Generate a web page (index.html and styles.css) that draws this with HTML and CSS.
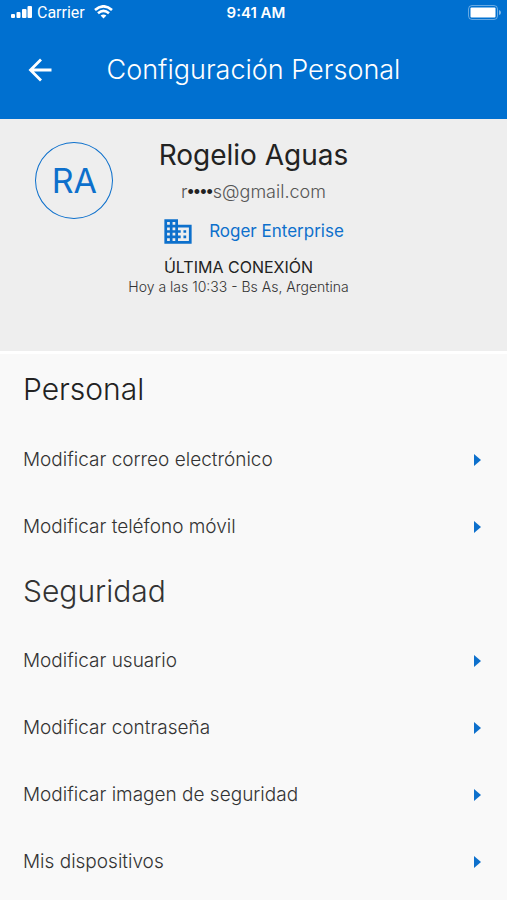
FILE: index.html
```html
<!DOCTYPE html>
<html lang="es">
<head>
  <meta charset="UTF-8" />
  <meta name="viewport" content="width=device-width, initial-scale=1.0"/>
  <title>Configuración Personal</title>
  <link rel="stylesheet" href="styles.css">
</head>
<body>
  <header class="header">
    <div class="status-bar">
      <div class="status-left">
        <svg width="21" height="12" viewBox="0 0 21 12" fill="#fff">
          <rect x="0" y="8" width="4" height="4" rx="1"/>
          <rect x="5.500" y="6" width="4" height="6" rx="1"/>
          <rect x="11" y="3" width="4.500" height="9" rx="1"/>
          <rect x="16.500" y="0" width="4.500" height="12" rx="1"/>
        </svg>
        <span class="carrier">Carrier</span>
        <svg class="wifi" width="19" height="14" viewBox="0 0 19 14" fill="none" stroke="#fff" stroke-width="2.6">
          <path d="M1 5Q9.500-2.400 18 5"/>
          <path d="M4 8.300Q9.500 3.400 15 8.300"/>
          <path d="M6.600 10.600Q9.500 8.200 12.400 10.600L9.500 13.500Z" fill="#fff" stroke="none"/>
        </svg>
      </div>
      <span class="time">9:41 AM</span>
      <svg class="battery" width="33" height="15" viewBox="0 0 33 15">
        <rect x="0.500" y="0.500" width="29" height="14" rx="3.500" fill="none" stroke="#fff" stroke-opacity="0.400"/>
        <rect x="2.500" y="2.500" width="25" height="10" rx="1" fill="#fff"/>
        <path d="M31 5Q33 5.500 33 7.500T31 10Z" fill="#fff" fill-opacity="0.500"/>
      </svg>
    </div>
    <div class="nav-bar">
      <button class="back" type="button" aria-label="Volver">
        <svg width="24" height="24" viewBox="0 0 24 24" fill="none" stroke="#fff" stroke-width="2.800">
          <path d="M23.500 12H3M13 1.500L2.500 12L13 22.500"/>
        </svg>
      </button>
      <h1>Configuración Personal</h1>
    </div>
  </header>

  <section class="profile">
    <div class="avatar">RA</div>
    <div class="profile-info">
      <h2>Rogelio Aguas</h2>
      <p class="email">r<span class="mask">••••</span>s@gmail.com</p>
      <p class="company">
        <svg width="30" height="27" viewBox="1 2 22 20" preserveAspectRatio="none" fill="#0d70cc">
          <path d="M12 7V3H2v18h20V7H12zM6 19H4v-2h2v2zm0-4H4v-2h2v2zm0-4H4V9h2v2zm0-4H4V5h2v2zm4 12H8v-2h2v2zm0-4H8v-2h2v2zm0-4H8V9h2v2zm0-4H8V5h2v2zm10 12h-8v-2h2v-2h-2v-2h2v-2h-2V9h8v10zm-2-8h-2v2h2v-2zm0 4h-2v2h2v-2z"/>
        </svg>
        <span>Roger Enterprise</span>
      </p>
      <div class="last-login">
        <h3>ÚLTIMA CONEXIÓN</h3>
        <p>Hoy a las 10:33 - Bs As, Argentina</p>
      </div>
    </div>
  </section>

  <main class="settings">
    <h2 class="first">Personal</h2>
    <a class="row" href="#">Modificar correo electrónico</a>
    <a class="row" href="#">Modificar teléfono móvil</a>

    <h2>Seguridad</h2>
    <a class="row" href="#">Modificar usuario</a>
    <a class="row" href="#">Modificar contraseña</a>
    <a class="row" href="#">Modificar imagen de seguridad</a>
    <a class="row" href="#">Mis dispositivos</a>
  </main>
</body>
</html>
```
FILE: styles.css
```css
* {
  box-sizing: border-box;
}

body {
  margin: 0;
  font-family: Inter, "Liberation Sans", sans-serif;
  font-weight: 300;
  background-color: #f9f9f9;
  color: #333;
}

h1, h2, h3, p {
  margin: 0;
  font-weight: 300;
}

svg {
  display: block;
}

.header {
  background: #0070d0;
  color: #fff;
}

.status-bar {
  display: grid;
  grid-template-columns: 1fr auto 1fr;
  align-items: center;
  height: 24px;
  padding: 0 6px 0 11px;
  font-size: 15px;
}

.status-left {
  display: flex;
  align-items: center;
  gap: 5px;
}

.carrier {
  font-family: Roboto, sans-serif;
  font-size: 16px;
  font-weight: 400;
}

.wifi {
  margin-left: 4px;
}

.time {
  font-weight: 600;
}

.battery {
  justify-self: end;
}

.nav-bar {
  display: grid;
  grid-template-columns: 1fr auto 1fr;
  align-items: center;
  height: 95px;
  padding: 0 28px 4px;
}

.back {
  justify-self: start;
  padding: 0;
  border: none;
  background: none;
  cursor: pointer;
}

h1 {
  font-size: 27px;
  line-height: 36px;
}

.profile {
  display: grid;
  grid-template-columns: 1fr auto 1fr;
  padding: 17px 0 55px;
  background: #eee;
  border-bottom: 3px solid #fff;
}

.avatar {
  display: flex;
  align-items: center;
  justify-content: center;
  justify-self: end;
  width: 78px;
  height: 77px;
  margin: 6px 15px 0 0;
  border: 1px solid #0d70cc;
  border-radius: 50%;
  color: #0d70cc;
  font-size: 34px;
  font-weight: 400;
}

.profile-info {
  text-align: center;
}

.profile-info h2 {
  color: #222;
  font-size: 28px;
  font-weight: 400;
  line-height: 38px;
}

.email {
  color: #555;
  font-size: 18px;
  line-height: 36px;
}

.mask {
  color: #222;
  font-family: "Liberation Sans", sans-serif;
}

.company {
  display: flex;
  align-items: center;
  justify-content: center;
  gap: 16px;
  height: 42px;
  color: #0d70cc;
  font-size: 17px;
  font-weight: 400;
}

.last-login {
  padding: 4px 30px 0 0;
}

.last-login h3 {
  color: #222;
  font-size: 16px;
  font-weight: 400;
  line-height: 22px;
}

.last-login p {
  font-size: 14px;
  line-height: 18px;
}

.settings {
  padding: 0 26px 0 23px;
}

.settings h2 {
  display: flex;
  align-items: center;
  height: 67px;
  padding-bottom: 5px;
  font-size: 30px;
}

.settings .first {
  height: 72px;
  padding-bottom: 2px;
  color: #222;
}

.row {
  display: flex;
  align-items: center;
  justify-content: space-between;
  height: 67px;
  color: #333;
  font-size: 19px;
  text-decoration: none;
}

.row::after {
  content: "";
  border: 6px solid transparent;
  border-left: 7px solid #0d70cc;
  border-right: none;
}
```
